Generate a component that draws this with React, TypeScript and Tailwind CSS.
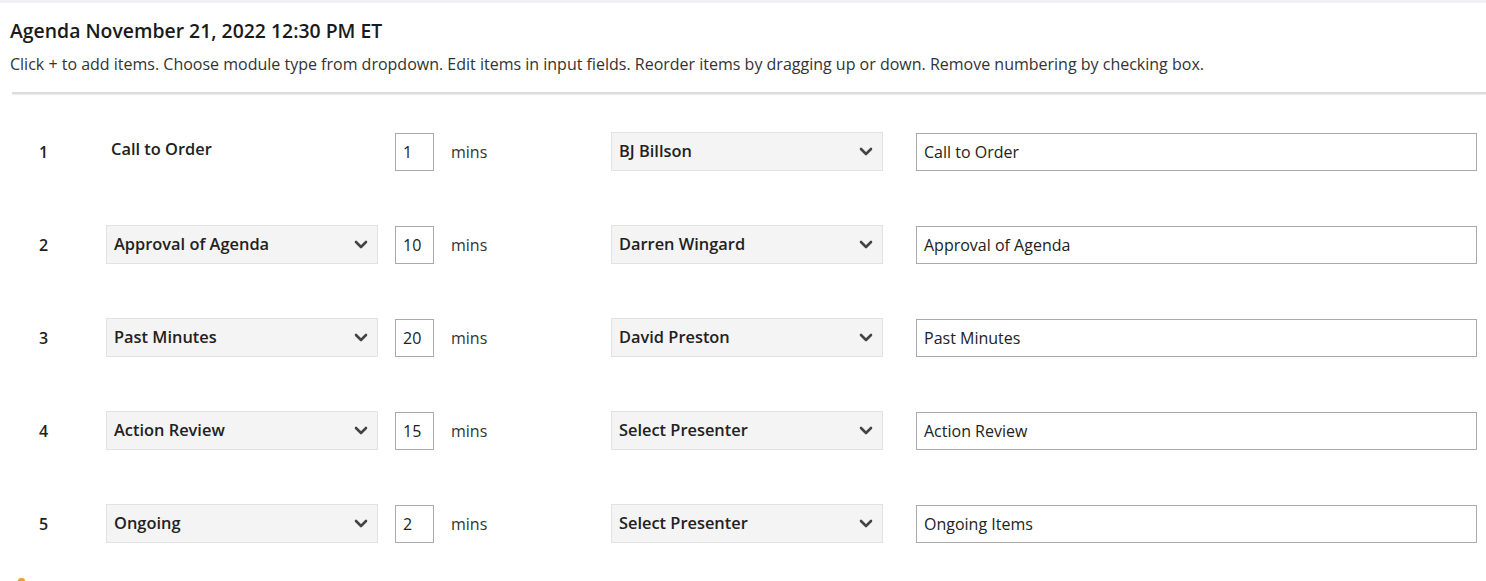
import React from 'react';

type Row = {
  num: number;
  module: string | null;
  label: string;
  mins: string;
  presenter: string;
  title: string;
};

const rows: Row[] = [
  { num: 1, module: null, label: 'Call to Order', mins: '1', presenter: 'BJ Billson', title: 'Call to Order' },
  { num: 2, module: 'Approval of Agenda', label: '', mins: '10', presenter: 'Darren Wingard', title: 'Approval of Agenda' },
  { num: 3, module: 'Past Minutes', label: '', mins: '20', presenter: 'David Preston', title: 'Past Minutes' },
  { num: 4, module: 'Action Review', label: '', mins: '15', presenter: 'Select Presenter', title: 'Action Review' },
  { num: 5, module: 'Ongoing', label: '', mins: '2', presenter: 'Select Presenter', title: 'Ongoing Items' },
];

const Chevron = () => (
  <svg width="14" height="9" viewBox="0 0 14 9" className="shrink-0">
    <path d="M2 2 L7 7 L12 2" fill="none" stroke="#444" strokeWidth="2.6" strokeLinecap="round" strokeLinejoin="round" />
  </svg>
);

const SelectBox = ({ value }: { value: string }) => (
  <div className="w-[272px] h-[39px] flex items-center justify-between pl-[7px] pr-[9px] bg-[#f4f4f4] border border-[#e2e2e2] text-[16.4px] font-semibold text-[#222]">
    <span>{value}</span>
    <Chevron />
  </div>
);

const App: React.FC = () => {
  return (
    <div className="w-[1486px] h-[581px] bg-white overflow-hidden relative" style={{ fontFamily: '"Open Sans", "Liberation Sans", sans-serif' }}>
      <div className="h-[3px] bg-[#f1f1f4]" />
      <div className="pl-[10px] pt-[15px]">
        <h1 className="text-[19.4px] font-semibold text-[#1a1a1a] leading-[26px]">Agenda November 21, 2022 12:30 PM ET</h1>
        <p className="mt-[9px] text-[16px] text-[#333] leading-[22px]">
          Click + to add items. Choose module type from dropdown. Edit items in input fields. Reorder items by dragging up or down. Remove numbering by checking box.
        </p>
      </div>
      <div className="ml-[12px] mt-[17px] h-[2px] bg-[#dcdcdc] shadow-[0_1px_1px_rgba(0,0,0,0.08)]" />

      <div className="pt-[38px] flex flex-col gap-[54px]">
        {rows.map((r) => (
          <div key={r.num} className="flex items-center h-[39px]">
            <div className="w-[106px] pl-[39px] text-[16px] font-semibold text-[#222]">{r.num}</div>
            {r.module ? (
              <SelectBox value={r.module} />
            ) : (
              <div className="w-[272px] pl-[5px] pb-[4px] text-[16.4px] font-semibold text-[#222]">{r.label}</div>
            )}
            <div className="ml-[17px] w-[39px] h-[38px] border border-[#aaaaaa] flex items-center pl-[7px] text-[16px] text-[#222]">
              {r.mins}
            </div>
            <div className="ml-[17px] w-[160px] text-[16px] text-[#333]">mins</div>
            <SelectBox value={r.presenter} />
            <div className="ml-[33px] w-[561px] h-[38px] border border-[#aaaaaa] flex items-center pl-[7px] text-[16px] text-[#222]">
              {r.title}
            </div>
          </div>
        ))}
      </div>

      <div className="absolute left-[18px] top-[578px] w-[7px] h-[3px] bg-[#f0a030] rounded-t-sm" />
    </div>
  );
};

export default App;
